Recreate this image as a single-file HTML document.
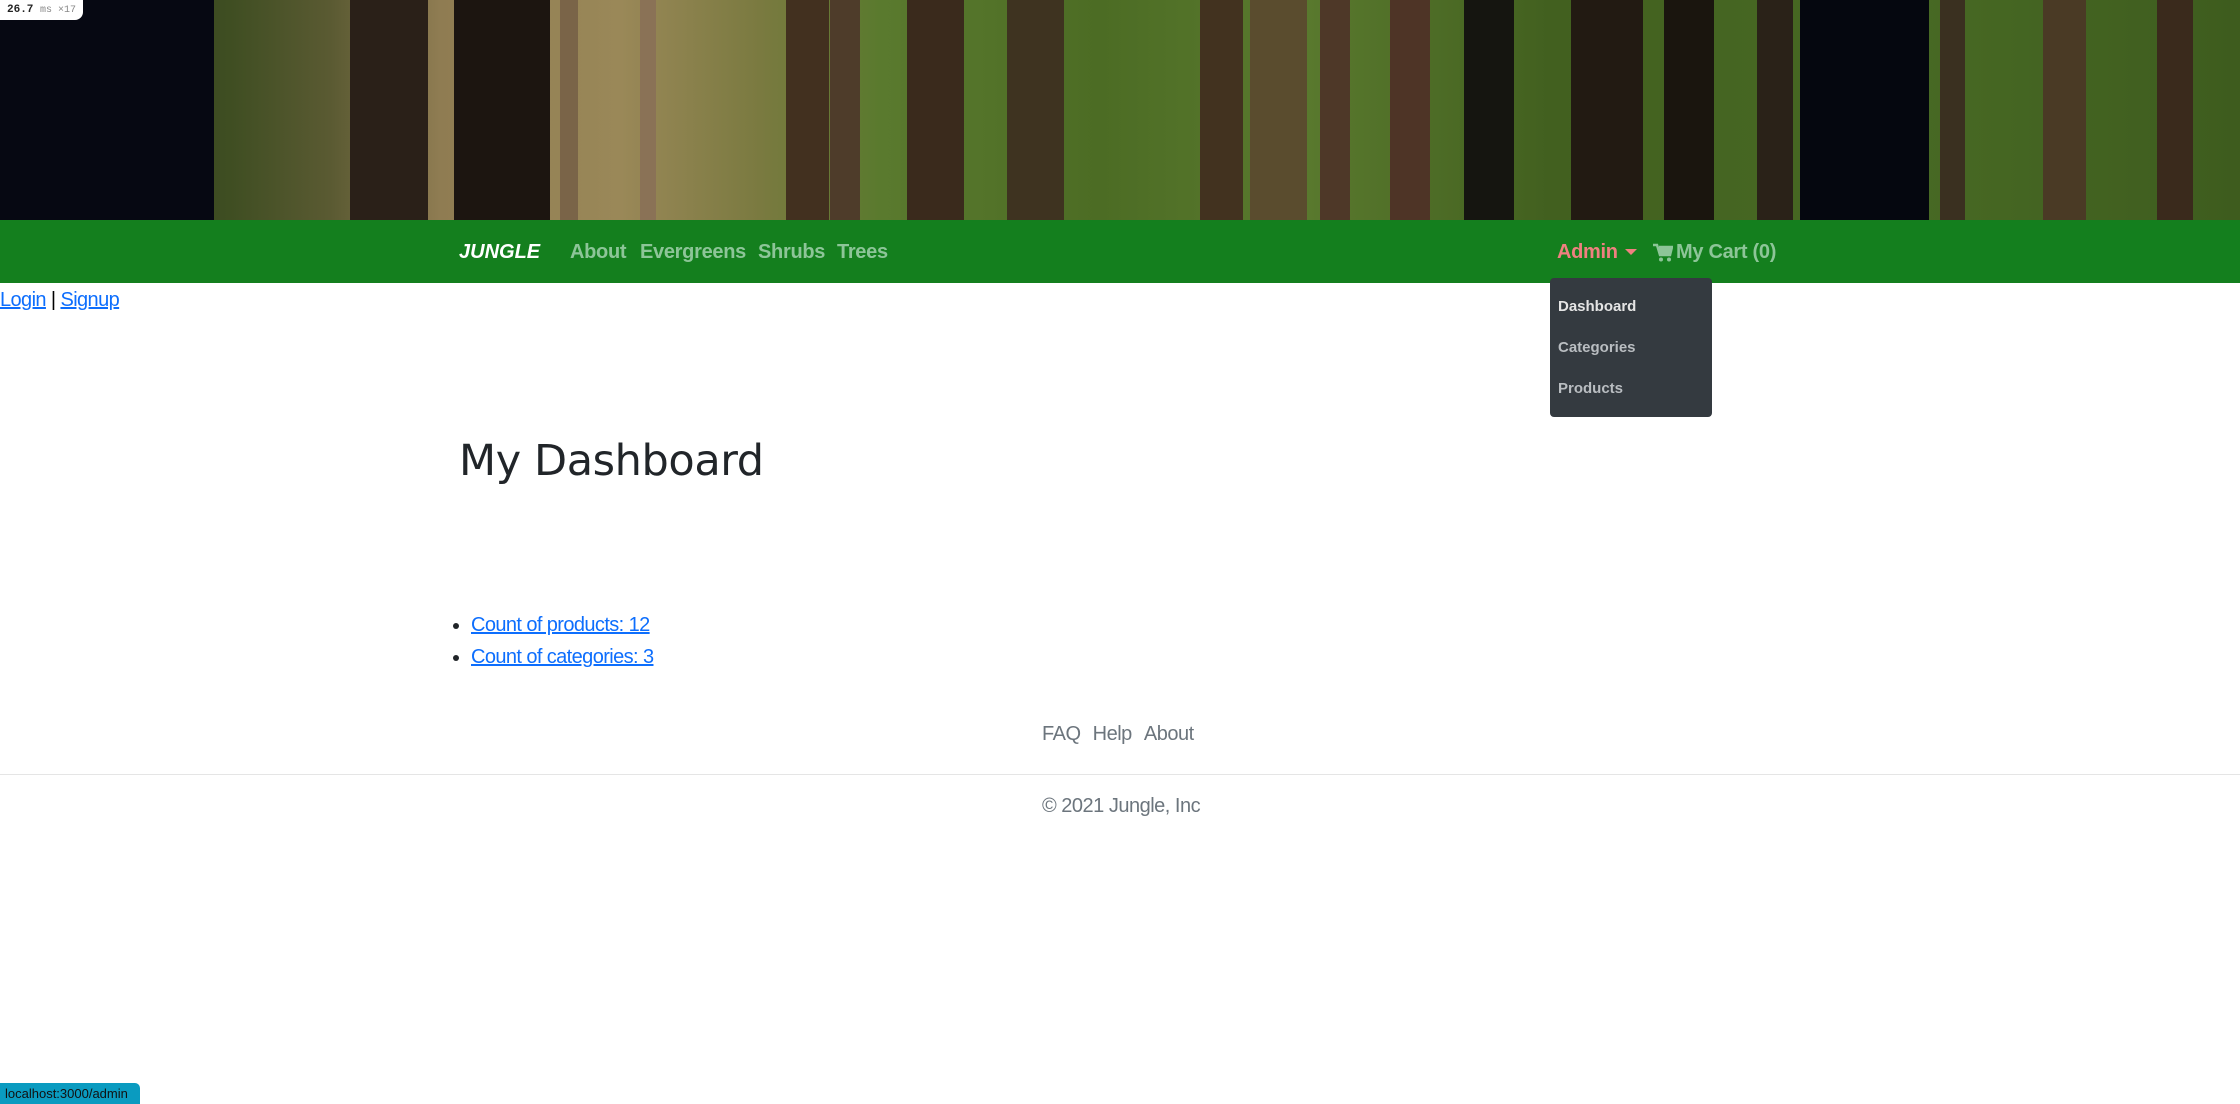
<!DOCTYPE html>
<html><head><meta charset="utf-8"><style>
*{margin:0;padding:0;box-sizing:border-box}
body{width:2240px;height:1104px;overflow:hidden;background:#fff;font-family:"Liberation Sans",sans-serif;position:relative}
#banner{position:absolute;left:0;top:0;width:2240px;height:220px;overflow:hidden;
background:linear-gradient(90deg,#2a3018 0px,#3f4e22 230px,#5a5a32 330px,#8f7c52 440px,#9a8858 620px,#7a7a40 760px,#5a7a2e 880px,#4c6c24 1100px,#5a7a2e 1300px,#42601f 1550px,#486a24 1900px,#3e5c1e 2240px)}
#banner div{position:absolute;top:0;height:220px}
#nav{position:absolute;left:0;top:220px;width:2240px;height:63px;background:#147f1e}
.nl{position:absolute;top:241px;font-size:20px;font-weight:bold;color:#8dc598;font-family:"Liberation Sans",sans-serif;letter-spacing:-0.3px}
a{color:#0d6efd}
.dd{position:absolute;left:1550px;top:278px;width:162px;height:139px;background:#343a40;border-radius:4px}
.dd div{position:absolute;left:8px;font-size:15px;font-weight:bold;font-family:"Liberation Sans",sans-serif;color:#b9bdc1}
.t{font-family:"Liberation Sans",sans-serif}
</style></head><body>
<div id="banner">
<div style="left:0;width:214px;background:#060812"></div>
<div style="left:350px;width:78px;background:#2a2018"></div>
<div style="left:454px;width:96px;background:#1c1510"></div>
<div style="left:560px;width:18px;background:#7a6448"></div>
<div style="left:640px;width:16px;background:#8a7256"></div>
<div style="left:786px;width:43px;background:#42301f"></div>
<div style="left:830px;width:30px;background:#4e3c2a"></div>
<div style="left:907px;width:57px;background:#3a2a1c"></div>
<div style="left:1007px;width:57px;background:#3e3320"></div>
<div style="left:1200px;width:43px;background:#42321f"></div>
<div style="left:1250px;width:57px;background:#5a4c2e"></div>
<div style="left:1320px;width:30px;background:#4e3828"></div>
<div style="left:1390px;width:40px;background:#4e3426"></div>
<div style="left:1464px;width:50px;background:#151510"></div>
<div style="left:1571px;width:72px;background:#221a12"></div>
<div style="left:1664px;width:50px;background:#1a150e"></div>
<div style="left:1757px;width:36px;background:#2a2218"></div>
<div style="left:1800px;width:129px;background:#05070f"></div>
<div style="left:1940px;width:25px;background:#3a3020"></div>
<div style="left:2043px;width:43px;background:#4a3a25"></div>
<div style="left:2157px;width:36px;background:#3a2a1c"></div>
</div>
<div style="position:absolute;left:0;top:0;width:83px;height:20px;background:#fff;border-radius:0 0 8px 0;font-family:'Liberation Mono',monospace;font-size:11px;line-height:20px;padding-left:7px;color:#222"><b>26.7</b> <span style="color:#888;font-size:10px">ms ×17</span></div>
<div id="nav"></div>
<div class="nl" style="left:459px;color:#fff;font-style:italic;font-weight:900;font-size:20px;letter-spacing:0">JUNGLE</div>
<div class="nl" style="left:570px">About</div>
<div class="nl" style="left:640px">Evergreens</div>
<div class="nl" style="left:758px">Shrubs</div>
<div class="nl" style="left:837px">Trees</div>
<div class="nl" style="left:1557px;color:#f08080">Admin</div>
<div style="position:absolute;left:1625px;top:249px;width:0;height:0;border-left:6px solid transparent;border-right:6px solid transparent;border-top:6px solid #f08080"></div>
<svg style="position:absolute;left:1653px;top:243px" width="20" height="20" viewBox="0 0 20 20"><path d="M0 2h4l3 10h10l2-8H6" fill="none" stroke="#8dc598" stroke-width="2.5"/><path d="M5 4h14l-2 8H8z" fill="#8dc598"/><circle cx="8" cy="16.5" r="2" fill="#8dc598"/><circle cx="16" cy="16.5" r="2" fill="#8dc598"/></svg>
<div class="nl" style="left:1676px">My Cart (0)</div>
<div class="t" style="position:absolute;left:0;top:289px;font-size:20px;letter-spacing:-0.6px"><a href="#">Login</a> | <a href="#">Signup</a></div>
<div class="dd">
<div style="top:20px;color:#e5e5e5">Dashboard</div>
<div style="top:61px">Categories</div>
<div style="top:102px">Products</div>
</div>
<div style="position:absolute;left:459px;top:436px;font-size:43px;color:#212529;font-family:'DejaVu Sans','Liberation Sans',sans-serif;letter-spacing:-0.4px">My Dashboard</div>
<ul class="t" style="position:absolute;left:471px;top:609px;font-size:20px;line-height:32px;letter-spacing:-0.6px;color:#212529">
<li><a href="#">Count of products: 12</a></li>
<li><a href="#">Count of categories: 3</a></li>
</ul>
<div class="t" style="position:absolute;left:1042px;top:723px;font-size:20px;color:#6c757d;letter-spacing:-0.5px;word-spacing:1px">FAQ &nbsp;Help &nbsp;About</div>
<div style="position:absolute;left:0;top:774px;width:2240px;height:1px;background:#e5e5e5"></div>
<div class="t" style="position:absolute;left:1042px;top:795px;font-size:20px;color:#6c757d;letter-spacing:-0.5px">© 2021 Jungle, Inc</div>
<div style="position:absolute;left:0;top:1083px;width:140px;height:21px;background:#0a9bc0;border-radius:0 5px 0 0;font-size:13px;line-height:21px;padding-left:5px;color:#111">localhost:3000/admin</div>
</body></html>
